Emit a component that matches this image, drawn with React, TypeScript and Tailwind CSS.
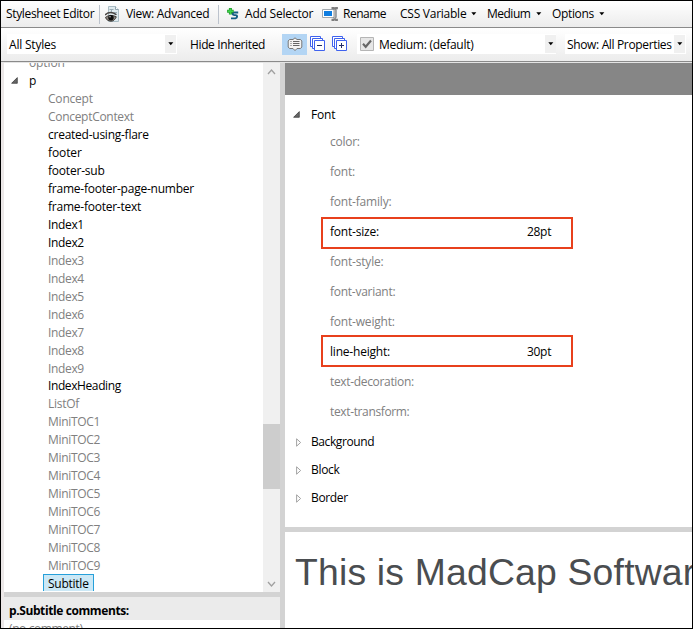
import React from "react";

type Item = { name: string; set?: boolean; look?: string };

const tree: Item[] = [
  { name: "Concept", look: "tracking-[-0.2px]" },
  { name: "ConceptContext", look: "tracking-[-0.3px]" },
  { name: "created-using-flare", set: true, look: "tracking-[-0.25px]" },
  { name: "footer", set: true, look: "tracking-[-0.1px]" },
  { name: "footer-sub", set: true, look: "tracking-[-0.2px]" },
  { name: "frame-footer-page-number", set: true, look: "tracking-[-0.23px]" },
  { name: "frame-footer-text", set: true, look: "tracking-[-0.24px]" },
  { name: "Index1", set: true, look: "tracking-[-0.35px]" },
  { name: "Index2", set: true, look: "tracking-[-0.35px]" },
  ...[3, 4, 5, 6, 7, 8, 9].map((n) => ({ name: `Index${n}`, look: "tracking-[-0.35px]" })),
  { name: "IndexHeading", set: true, look: "-mt-px tracking-[-0.4px]" },
  { name: "ListOf", look: "tracking-[-0.25px]" },
  ...[1, 2, 3, 4, 5, 6, 7, 8, 9].map((n) => ({ name: `MiniTOC${n}`, look: "tracking-[-0.3px]" })),
];

const properties: { name: string; value?: string; box?: string; look: string }[] = [
  { name: "color:", look: "tracking-[-0.25px]" },
  { name: "font:", look: "tracking-[-0.2px]" },
  { name: "font-family:", look: "tracking-[-0.2px]" },
  { name: "font-size:", value: "28pt", box: "top-0", look: "tracking-[-0.2px]" },
  { name: "font-style:", look: "tracking-[-0.2px]" },
  { name: "font-variant:", look: "tracking-[-0.27px]" },
  { name: "font-weight:", look: "tracking-[-0.2px]" },
  { name: "line-height:", value: "30pt", box: "-top-0.5", look: "tracking-[-0.2px]" },
  { name: "text-decoration:", look: "tracking-[-0.33px]" },
  { name: "text-transform:", look: "tracking-[-0.36px]" },
];

const groups = [
  { name: "Background", look: "tracking-[-0.4px]" },
  { name: "Block", look: "tracking-[-0.3px]" },
  { name: "Border", look: "tracking-[-0.35px]" },
];

function Caret() {
  return (
    <svg width="6" height="4" viewBox="0 0 6 4" className="shrink-0">
      <path d="M0.3 0.3h5L2.8 3.2z" fill="#000" />
    </svg>
  );
}

function Expanded({ className }: { className: string }) {
  return (
    <svg width="7" height="7" viewBox="0 0 7 7" className={`shrink-0 ${className}`}>
      <path d="M6.3 0.6v5.7H0.6z" fill="#666" stroke="#333" strokeWidth="0.7" />
    </svg>
  );
}

function Collapsed() {
  return (
    <svg width="6" height="9" viewBox="0 0 6 9" className="shrink-0">
      <path d="M0.6 0.8v7.4L4.6 4.5z" fill="#fff" stroke="#999" strokeWidth="0.9" />
    </svg>
  );
}

function ViewIcon() {
  return (
    <svg width="15" height="17" viewBox="0 0 15 17" className="shrink-0">
      <path d="M3.5 0.5h7l3 3v12h-10z" fill="#dfeaee" stroke="#a9bcc4" />
      <path d="M10.5 0.5v3h3" fill="#fff" stroke="#8fa3ad" />
      <path d="M4.5 3.5h4M6.5 3.5v3M9 6.5h3M10 8.5h2" stroke="#9aacb5" fill="none" />
      <path d="M0 9Q5 4.4 11.3 8.6" stroke="#4a4643" strokeWidth="1.5" fill="none" />
      <path d="M0.3 11.5Q5 7.6 11.3 10.8 9.5 15.4 5.5 15.2 2 15 0.3 11.5z" fill="#8d867f" stroke="#383431" strokeWidth="0.9" />
      <circle cx="6" cy="11.7" r="2.7" fill="#0c0c0c" />
      <circle cx="5" cy="10.8" r="0.7" fill="#ddd" />
    </svg>
  );
}

function AddIcon() {
  return (
    <svg width="12" height="12" viewBox="0 0 12 12" className="shrink-0">
      <path d="M11.2 4.5H7.2Q5.6 4.5 5.6 5.7T7.2 7.1h1.3q1.6 0 1.6 1.5T8.5 10.4H4" fill="none" stroke="#135e83" strokeWidth="1.9" />
      <path d="M3.4 0v6.6M0.1 3.3h6.6" stroke="#1f9f2b" strokeWidth="3" />
      <path d="M3.4 0.7v5.2M0.8 3.3H6" stroke="#3fd34a" strokeWidth="1.4" />
    </svg>
  );
}

function RenameIcon() {
  return (
    <svg width="16" height="14" viewBox="0 0 16 14" className="shrink-0">
      <path d="M0.5 2.5h14v8h-14z" fill="#fff" stroke="#a3a9af" />
      <path d="M2 4h8v5H2z" fill="#0f7de0" />
      <path d="M9.5 1.2h2l1.2.8 1.2-.8h2M9.5 12.8h2l1.2-.8 1.2.8h2M12.7 2v10" fill="none" stroke="#7d7d7d" strokeWidth="2.2" />
      <path d="M12.7 2.5v9" stroke="#d5d5d5" strokeWidth="0.8" />
    </svg>
  );
}

function BubbleIcon() {
  return (
    <svg width="16" height="15" viewBox="0 0 16 15" className="shrink-0">
      <path
        d="M2.5 2.5h3.5L8 0.8l2 1.7h3.5l1.3 1.5v6l-1.3 1.5H10L8 13.6 6 11.5H2.5L1.2 10V4z"
        fill="#f4f4f4"
        stroke="#777"
      />
      <path d="M3.5 4.5h1M6 4.5h6.5M3.5 6.5h1M6 6.5h6.5M3.5 8.5h1M6 8.5h6.5" stroke="#666" />
    </svg>
  );
}

function StackIcon({ plus = false }: { plus?: boolean }) {
  return (
    <svg width="16" height="16" viewBox="0 0 16 16" className="shrink-0" fill="#fff" stroke="#3f62ee">
      <path d="M0.5 0.5h10v10h-10z" />
      <path d="M2.5 2.5h10v10h-10z" />
      <path d="M4.5 4.5h10v10h-10z" />
      <path d={plus ? "M7 9.5h5M9.5 7v5" : "M7 9.5h5"} stroke="#222c66" />
    </svg>
  );
}

function Drop({ className }: { className: string }) {
  return (
    <span className={`flex items-center justify-center bg-[#f0f0f0] ${className}`}>
      <Caret />
    </span>
  );
}

export default function App() {
  return (
    <div className="flex h-[629px] w-[693px] flex-col overflow-hidden border border-black bg-white font-['Open_Sans','Noto_Sans',sans-serif] text-[12px] leading-[18px] whitespace-nowrap text-black">
      <div className="flex h-[27px] shrink-0 items-center border-b border-[#8a8a8a] bg-gradient-to-b from-white to-[#ececec]">
        <span className="ml-[5px] w-[93px] tracking-[-0.34px]">Stylesheet Editor</span>
        <span className="h-[19px] w-px bg-[#bcc3cd]" />
        <span className="ml-[5px]"><ViewIcon /></span>
        <span className="ml-[6px] w-[92px] tracking-[-0.28px]">View: Advanced</span>
        <span className="h-[19px] w-px bg-[#bcc3cd]" />
        <span className="ml-2"><AddIcon /></span>
        <span className="ml-[6px] w-[77px] tracking-[-0.2px]">Add Selector</span>
        <RenameIcon />
        <span className="ml-[5px] w-[57px] tracking-[-0.5px]">Rename</span>
        <span className="w-[71px] tracking-[-0.25px]">CSS Variable</span>
        <Caret />
        <span className="ml-[10px] w-[49px] tracking-[-0.5px]">Medium</span>
        <Caret />
        <span className="ml-[10px] w-[47px] tracking-[-0.35px]">Options</span>
        <Caret />
      </div>
      <div className="flex h-[34px] shrink-0 items-center border-b border-[#8a8a8a] bg-gradient-to-b from-white to-[#ececec] pb-px">
        <div className="ml-[6px] flex h-5 w-[170px] items-center justify-between bg-white pl-[2px]">
          <span className="mt-0.5 tracking-[-0.2px]">All Styles</span>
          <Drop className="mr-px h-[18px] w-[11px]" />
        </div>
        <span className="mt-0.5 ml-[13px] w-[92px] tracking-[-0.37px]">Hide Inherited</span>
        <span className="flex h-[21px] w-[25px] items-center justify-center bg-[#b3d5f4]"><BubbleIcon /></span>
        <span className="ml-[3px]"><StackIcon /></span>
        <span className="ml-[6px]"><StackIcon plus /></span>
        <div className="ml-[9px] flex h-5 w-[199px] items-center bg-white pl-[3px]">
          <svg width="14" height="14" viewBox="0 0 14 14" className="shrink-0">
            <path d="M0.5 0.5h13v13H0.5z" fill="#e6e6e6" stroke="#b5b5b5" />
            <path d="M3 6.8l2.7 3L11 3.5" fill="none" stroke="#666" strokeWidth="2.1" />
          </svg>
          <span className="mt-0.5 ml-[5px] flex-1 tracking-[-0.28px]">Medium: (default)</span>
          <Drop className="h-[18px] w-[11px]" />
        </div>
        <div className="ml-[9px] flex h-5 w-[121px] items-center justify-between bg-white pl-[2px]">
          <span className="mt-0.5 w-[107px] tracking-[-0.35px]">Show: All Properties</span>
          <Drop className="mr-px h-[18px] w-[11px]" />
        </div>
      </div>
      <div className="flex min-h-0 flex-1 border-t border-[#e4e4e4]">
        <div className="w-[3px] shrink-0 bg-[#ece8e8]" />
        <div className="flex w-[276px] shrink-0 flex-col">
          <div className="flex h-[529px] shrink-0">
            <div className="flex min-w-0 flex-1 flex-col overflow-hidden">
              <div className="-mt-[9px] h-[18px] shrink-0 pl-[25px] tracking-[-0.1px] text-[#808080]">option</div>
              <div className="flex h-[18px] shrink-0 items-center pl-[7px]">
                <Expanded className="-mt-px" />
                <span className="ml-[11px]">p</span>
              </div>
              {tree.map((t) => (
                <div key={t.name} className={`h-[18px] shrink-0 pl-[44px] ${t.set ? "text-black" : "text-[#808080]"} ${t.look ?? ""}`}>
                  {t.name}
                </div>
              ))}
              <div className="-mt-px ml-[39px] h-[17px] w-[51px] shrink-0 overflow-hidden border border-b-0 border-[#26a0da] bg-[#cbe8f6] pl-1 leading-[18px] tracking-[-0.25px]">
                Subtitle
              </div>
            </div>
            <div className="flex w-[17px] shrink-0 flex-col items-center bg-[#f0f0f0]">
              <svg width="9" height="6" viewBox="0 0 9 6" className="mt-[6px] shrink-0">
                <path d="M1 5l3.5-4L8 5" fill="none" stroke="#a0a0a0" strokeWidth="1.3" />
              </svg>
              <div className="mt-[349px] h-[65px] w-full shrink-0 bg-[#cdcdcd]" />
              <svg width="9" height="6" viewBox="0 0 9 6" className="mt-[92px] shrink-0">
                <path d="M1 1l3.5 4L8 1" fill="none" stroke="#a0a0a0" strokeWidth="1.3" />
              </svg>
            </div>
          </div>
          <div className="h-[5px] shrink-0 bg-[#d3d3d3]" />
          <div className="h-[23px] shrink-0 bg-[#ebebeb] pt-[5px] pl-[5px] font-bold tracking-[-0.4px]">p.Subtitle comments:</div>
          <div className="flex-1 pl-[5px] tracking-[-0.4px] text-[#808080]">(no comment)</div>
        </div>
        <div className="w-[5px] shrink-0 bg-[#d3d3d3]" />
        <div className="flex min-w-0 flex-1 flex-col">
          <div className="h-8 shrink-0 bg-[#868686]" />
          <div className="h-[432px] shrink-0 pt-[11px]">
            <div className="flex h-[21px] items-center pl-2">
              <Expanded className="-mt-[5px]" />
              <span className="-mt-[3px] ml-[11px] tracking-[-0.2px]">Font</span>
            </div>
            {properties.map((p) => (
              <div
                key={p.name}
                className={`relative flex h-[30px] items-center pl-[45px] ${p.look} ${p.value ? "text-black" : "text-[#808080]"}`}
              >
                <span className="w-[197px]">{p.name}</span>
                {p.value && <span className="tracking-[-0.3px]">{p.value}</span>}
                {p.box && <div className={`absolute left-9 h-8 w-[252px] border-2 border-[#e8401c] ${p.box}`} />}
              </div>
            ))}
            <div className="mt-px">
              {groups.map((g) => (
                <div key={g.name} className="flex h-7 items-center pl-[11px]">
                  <Collapsed />
                  <span className={`ml-[9px] ${g.look}`}>{g.name}</span>
                </div>
              ))}
            </div>
          </div>
          <div className="h-[5px] shrink-0 bg-[#d3d3d3]" />
          <div className="flex-1 overflow-hidden pt-[19px] pl-[10px] font-['Liberation_Sans',Arial,sans-serif] text-[37.33px] leading-[42px] tracking-[0.19px] text-[#4a4d50]">
            This is MadCap Software
          </div>
        </div>
      </div>
    </div>
  );
}
